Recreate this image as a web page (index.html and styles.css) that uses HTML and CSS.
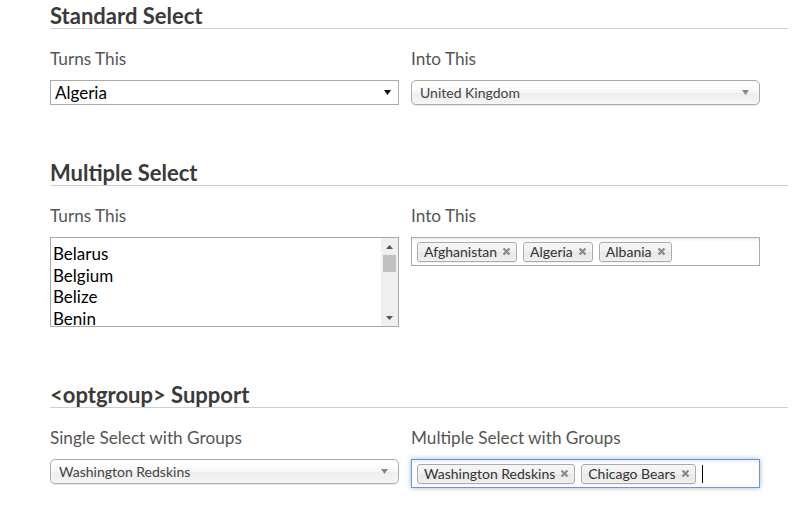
FILE: index.html
```html
<!DOCTYPE html>
<html>
<head>
<meta charset="utf-8">
<link rel="stylesheet" href="styles.css">
</head>
<body>
<div class="page">
  <section class="demo">
    <h2>Standard Select</h2>
    <div class="row">
      <div class="col">
        <div class="label">Turns This</div>
        <div class="native-select">
          <span>Algeria</span>
          <svg class="native-arrow" width="7" height="5" viewBox="0 0 7 5"><path d="M0 0H7L3.5 5Z" fill="#111"/></svg>
        </div>
      </div>
      <div class="col">
        <div class="label">Into This</div>
        <div class="chosen-single">
          <span>United Kingdom</span>
          <svg class="chosen-arrow" width="7" height="5" viewBox="0 0 7 5"><path d="M0 0H7L3.5 5Z" fill="#888"/></svg>
        </div>
      </div>
    </div>
  </section>

  <section class="demo">
    <h2>Multiple Select</h2>
    <div class="row">
      <div class="col">
        <div class="label">Turns This</div>
        <div class="listbox">
          <div class="list-items">
            <div class="opt">Belarus</div>
            <div class="opt">Belgium</div>
            <div class="opt">Belize</div>
            <div class="opt">Benin</div>
          </div>
          <div class="scrollbar">
            <svg class="sb-arrow" width="7" height="4" viewBox="0 0 7 4"><path d="M0 4H7L3.5 0Z" fill="#555"/></svg>
            <div class="sb-track"><div class="sb-thumb"></div></div>
            <svg class="sb-arrow" width="7" height="4" viewBox="0 0 7 4"><path d="M0 0H7L3.5 4Z" fill="#555"/></svg>
          </div>
        </div>
      </div>
      <div class="col">
        <div class="label">Into This</div>
        <div class="chosen-multi">
          <span class="choice">Afghanistan<svg class="close" width="9" height="9" viewBox="0 0 9 9"><path d="M1.5 1.5L7.5 7.5M7.5 1.5L1.5 7.5" stroke="#8a8a8a" stroke-width="2.2"/></svg></span>
          <span class="choice">Algeria<svg class="close" width="9" height="9" viewBox="0 0 9 9"><path d="M1.5 1.5L7.5 7.5M7.5 1.5L1.5 7.5" stroke="#8a8a8a" stroke-width="2.2"/></svg></span>
          <span class="choice">Albania<svg class="close" width="9" height="9" viewBox="0 0 9 9"><path d="M1.5 1.5L7.5 7.5M7.5 1.5L1.5 7.5" stroke="#8a8a8a" stroke-width="2.2"/></svg></span>
        </div>
      </div>
    </div>
  </section>

  <section class="demo">
    <h2>&lt;optgroup&gt; Support</h2>
    <div class="row">
      <div class="col">
        <div class="label">Single Select with Groups</div>
        <div class="chosen-single">
          <span>Washington Redskins</span>
          <svg class="chosen-arrow" width="7" height="5" viewBox="0 0 7 5"><path d="M0 0H7L3.5 5Z" fill="#888"/></svg>
        </div>
      </div>
      <div class="col">
        <div class="label">Multiple Select with Groups</div>
        <div class="chosen-multi focused">
          <span class="choice">Washington Redskins<svg class="close" width="9" height="9" viewBox="0 0 9 9"><path d="M1.5 1.5L7.5 7.5M7.5 1.5L1.5 7.5" stroke="#8a8a8a" stroke-width="2.2"/></svg></span>
          <span class="choice">Chicago Bears<svg class="close" width="9" height="9" viewBox="0 0 9 9"><path d="M1.5 1.5L7.5 7.5M7.5 1.5L1.5 7.5" stroke="#8a8a8a" stroke-width="2.2"/></svg></span>
          <span class="caret"></span>
        </div>
      </div>
    </div>
  </section>
</div>
</body>
</html>
```

FILE: styles.css
```css
html, body {
  margin: 0;
  padding: 0;
  background: #fff;
}

body {
  font-family: Lato, "Noto Sans", sans-serif;
  color: #444;
}

.page {
  padding-left: 50px;
  width: 738px;
}

.demo {
  margin-bottom: 52px;
}

h2 {
  margin: 0;
  padding: 4px 0 0 0;
  font-size: 22px;
  line-height: 24px;
  font-weight: 700;
  color: #3a3a3a;
  border-bottom: 1px solid #cfcfcf;
}

.row {
  display: grid;
  grid-template-columns: 349px 349px;
  column-gap: 12px;
  margin-top: 18px;
}

.label {
  font-size: 17.2px;
  line-height: 24px;
  color: #555;
  margin-bottom: 9px;
}

/* native single select */
.native-select {
  box-sizing: border-box;
  height: 25px;
  border: 1px solid #a9a9a9;
  display: flex;
  align-items: center;
  justify-content: space-between;
  padding: 0 7px 0 4px;
  font-size: 17px;
  color: #000;
  background: #fff;
}

.native-arrow {
  display: block;
}

/* chosen single */
.chosen-single {
  height: 23px;
  border: 1px solid #aaa;
  border-radius: 5px;
  background: linear-gradient(#fff 20%, #f6f6f6 50%, #eee 52%, #f4f4f4 100%);
  box-shadow: 0 0 3px #fff inset, 0 1px 1px rgba(0, 0, 0, 0.1);
  display: flex;
  align-items: center;
  justify-content: space-between;
  padding: 0 10px 0 8px;
  font-size: 14px;
  line-height: 22px;
  color: #444;
}

.chosen-arrow {
  display: block;
}

/* native listbox */
.listbox {
  box-sizing: border-box;
  height: 90px;
  border: 1px solid #a9a9a9;
  display: flex;
  overflow: hidden;
  background: #fff;
}

.list-items {
  flex: 1;
  padding: 5px 0 0 2px;
  font-size: 17px;
  line-height: 21.7px;
  color: #000;
}

.scrollbar {
  width: 17px;
  background: #f0f0f0;
  display: flex;
  flex-direction: column;
  align-items: center;
}

.sb-arrow {
  display: block;
  margin: 7px 0 6px;
}

.sb-track {
  flex: 1;
  width: 100%;
  display: flex;
  justify-content: center;
}

.sb-thumb {
  width: 13px;
  height: 17px;
  background: #c1c1c1;
}

/* chosen multi */
.chosen-multi {
  box-sizing: border-box;
  height: 29px;
  border: 1px solid #aaa;
  background: linear-gradient(#eee 1%, #fff 15%);
  display: flex;
  align-items: center;
  gap: 6px;
  padding: 0 0 0 5px;
}

.chosen-multi.focused {
  border-color: #5897fb;
  box-shadow: 0 0 5px rgba(0, 0, 0, 0.3);
}

.choice {
  box-sizing: border-box;
  height: 20px;
  display: inline-flex;
  align-items: center;
  gap: 5px;
  padding: 0 5px 0 6px;
  border: 1px solid #aaa;
  border-radius: 3px;
  background: linear-gradient(#f4f4f4 20%, #f0f0f0 50%, #e8e8e8 52%, #eee 100%);
  box-shadow: 0 0 2px #fff inset, 0 1px 0 rgba(0, 0, 0, 0.05);
  font-size: 14px;
  line-height: 18px;
  color: #333;
}

.close {
  display: block;
}

.caret {
  width: 1px;
  height: 18px;
  background: #000;
  margin-left: 0;
}
```
